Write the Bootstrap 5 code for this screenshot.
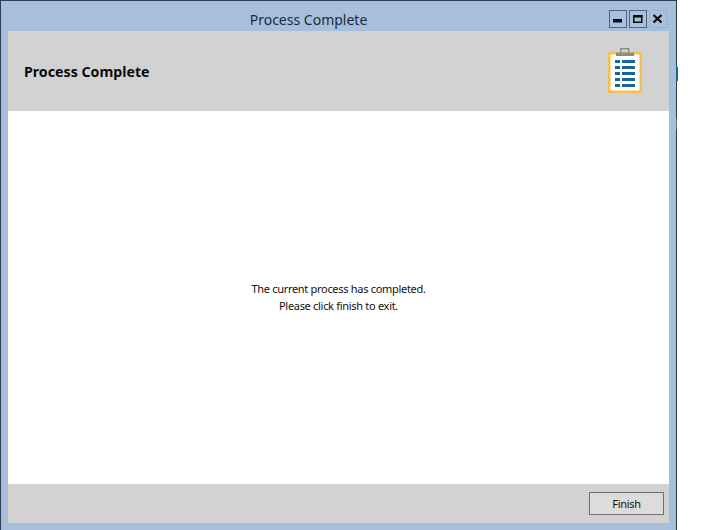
<!DOCTYPE html>
<html lang="en">
<head>
<meta charset="utf-8">
<title>Process Complete</title>
<link href="https://cdn.jsdelivr.net/npm/bootstrap@5.3.0/dist/css/bootstrap.min.css" rel="stylesheet">
<style>
html, body { height: 530px; margin: 0; overflow: hidden; background: #fff; }
.win-frame { width: 677px; height: 530px; background: #a7bfdc; border: solid #2f3f50; border-width: 1px 1px 0 1px; padding: 0 7px 7px 7px; position: relative; }
.win-title { height: 30px; position: relative; }
.win-title-text { font: 14px "Noto Sans", sans-serif; color: #1f2b38; text-align: center; padding: 9px 60px 0 0; line-height: 20px; }
.win-btns { position: absolute; right: 2px; top: 9px; gap: 2px; }
.win-btn { width: 18px; height: 18px; border: 1px solid #52657c; background: #a9c1de; }
.win-btn.is-close { border-color: #9db3cd; }
.pane-head { height: 80px; background: #d2d2d2; padding: 0 26px 0 16px; }
.pane-head-title { font: bold 14.2px "Noto Sans", sans-serif; color: #0a0a0a; }
.pane-body { height: 373px; background: #fff; font: 11px/17px "Noto Sans", sans-serif; letter-spacing: -0.3px; color: #111; padding-bottom: 1px; }
.pane-foot { height: 39px; background: #d2d2d2; padding: 0 5px 1px 0; }
.finish-btn { width: 75px; height: 23px; padding: 0; background: #dcdcdc; border: 1px solid #707070; border-radius: 0; font: 11px "Noto Sans", sans-serif; letter-spacing: -0.3px; color: #111; }
.edge-mark { position: absolute; left: 675px; width: 2px; }
.edge-blue { top: 66px; height: 14px; background: #1a6496; }
.edge-grey { top: 118px; height: 10px; background: #6a6f80; width: 1px; }
</style>
</head>
<body>
<div class="win-frame d-flex flex-column">
  <div class="win-title">
    <div class="win-title-text">Process Complete</div>
    <div class="win-btns d-flex">
      <div class="win-btn d-flex align-items-center justify-content-center"><svg width="16" height="16" viewBox="0 0 16 16"><rect x="3" y="8" width="9" height="3.5" fill="#0b0b0b"/></svg></div>
      <div class="win-btn d-flex align-items-center justify-content-center"><svg width="16" height="16" viewBox="0 0 16 16"><rect x="3.75" y="4.75" width="8" height="6.5" fill="none" stroke="#0b0b0b" stroke-width="1.5"/><rect x="3" y="4" width="9.5" height="2.5" fill="#0b0b0b"/></svg></div>
      <div class="win-btn is-close d-flex align-items-center justify-content-center"><svg width="16" height="16" viewBox="0 0 16 16"><path d="M3.5 4l8 7.5M11.5 4l-8 7.5" stroke="#0b0b0b" stroke-width="2.2" fill="none"/></svg></div>
    </div>
  </div>
  <div class="pane-head d-flex align-items-center justify-content-between">
    <div class="pane-head-title">Process Complete</div>
    <svg width="36" height="46" viewBox="0 0 36 46">
      <rect x="2.25" y="5.25" width="31.5" height="38.5" fill="#fff" stroke="#f2c14f" stroke-width="2.5"/>
      <rect x="13.7" y="0.7" width="8" height="5" fill="none" stroke="#8b8b8b" stroke-width="1.4"/>
      <rect x="9" y="4.5" width="18" height="3.5" fill="#8b8b8b"/>
      <g fill="#1a6496">
        <rect x="8" y="12" width="5" height="3"/><rect x="15" y="12" width="13" height="3"/>
        <rect x="8" y="18" width="5" height="3"/><rect x="15" y="18" width="13" height="3"/>
        <rect x="8" y="24" width="5" height="3"/><rect x="15" y="24" width="13" height="3"/>
        <rect x="8" y="30" width="5" height="3"/><rect x="15" y="30" width="13" height="3"/>
        <rect x="8" y="36" width="5" height="3"/><rect x="15" y="36" width="13" height="3"/>
      </g>
    </svg>
  </div>
  <div class="pane-body d-flex flex-column align-items-center justify-content-center text-center">
    <div>The current process has completed.</div>
    <div>Please click finish to exit.</div>
  </div>
  <div class="pane-foot d-flex align-items-center justify-content-end">
    <button type="button" class="btn finish-btn">Finish</button>
  </div>
  <div class="edge-mark edge-blue"></div>
  <div class="edge-mark edge-grey"></div>
</div>
</body>
</html>
